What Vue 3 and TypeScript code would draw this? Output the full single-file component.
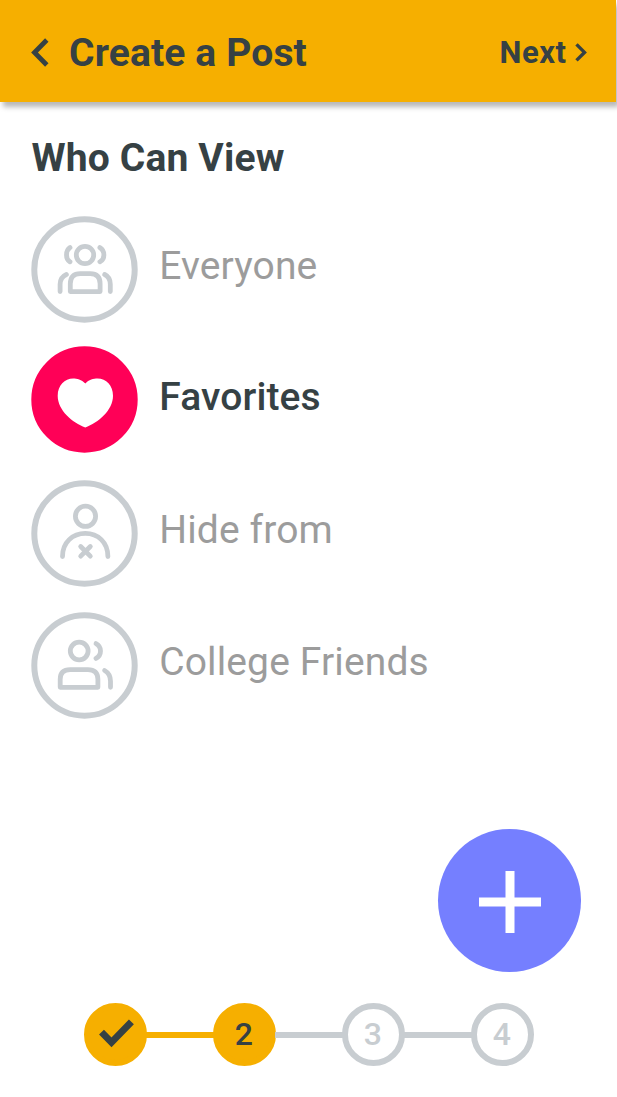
<script setup lang="ts">
import { ref } from 'vue'

type Icon = 'everyone' | 'favorites' | 'hide' | 'college'
interface Audience { icon: Icon; label: string }

const audiences: Audience[] = [
  { icon: 'everyone', label: 'Everyone' },
  { icon: 'favorites', label: 'Favorites' },
  { icon: 'hide', label: 'Hide from' },
  { icon: 'college', label: 'College Friends' },
]
const selected = ref<Icon>('favorites')
const steps = [1, 2, 3, 4]
const currentStep = 2
</script>

<template>
  <main class="screen">
    <header class="bar">
      <button class="back" aria-label="Back">
        <svg width="18" height="30" viewBox="0 0 18 30"><path d="M15.8 2 3.5 14.5l12.3 12.5" /></svg>
      </button>
      <h1>Create a Post</h1>
      <button class="next">
        <span>Next</span>
        <svg width="13" height="20" viewBox="0 0 13 20"><path d="m1.5 2.4 8 8-8 8" /></svg>
      </button>
    </header>

    <h2>Who Can View</h2>

    <ul class="list">
      <li
        v-for="a in audiences"
        :key="a.icon"
        :class="['row', a.icon, { active: selected === a.icon }]"
        @click="selected = a.icon"
      >
        <svg class="badge" viewBox="-53.5 -53.5 107 107">
          <circle class="ring" r="50.2" />
          <g v-if="a.icon === 'everyone'" class="line">
            <circle cx=".5" cy="-14.5" r="8.7" />
            <path d="M-14.5-21.9Q-18-19.5-18-14.6T-14.5-7.7M15.4-21.9Q19.4-19.5 19.4-14.6T15.4-7.7" />
            <path d="M-14.2 22.1V14.3Q-14.2 4.2-4.3 4.2H5.7Q15.6 4.2 15.6 14.3V22.1Z" />
            <path d="M-18.1 5Q-24.4 7.8-24.4 14.8V22.1M20.2 5Q25.8 7.8 25.8 14.8V22.1" />
          </g>
          <path
            v-else-if="a.icon === 'favorites'"
            class="heart"
            d="M.8-15.9C-2.8-19.7-7.8-20.9-11.3-20.9C-19.8-20.9-26.8-13.7-26.8-3.7C-26.8 10.8-12 23.3.8 28C13.7 23.3 28.5 10.8 28.5-3.7C28.5-13.7 21.7-20.9 13-20.9C9.2-20.9 4.2-19.7.8-15.9Z"
          />
          <g v-else-if="a.icon === 'hide'" class="line">
            <circle cx="1" cy="-17.2" r="10.1" />
            <path d="M-22 23C-22 8.8-11.8-.1.8-.1S23.4 8.8 23.4 23" />
            <path d="m-3.8 13 9.6 9.6m0-9.6-9.6 9.6" />
          </g>
          <g v-else class="line">
            <circle cx="-5.3" cy="-14.5" r="8.9" />
            <path d="M11.5-21.9Q16-19.5 16-14.5T11.5-7.1" />
            <path d="M-24.3 21.8V13.8Q-24.3 4.2-14.3 4.2H3.4Q13.4 4.2 13.4 13.8V21.8Z" />
            <path d="M20.1 5Q26 8.3 26 15.8V21.8" />
          </g>
        </svg>
        <span class="label">{{ a.label }}</span>
      </li>
    </ul>

    <button class="fab" aria-label="Add">
      <svg width="62" height="62" viewBox="0 0 62 62"><path d="M31 0v62M0 31h62" /></svg>
    </button>

    <ol class="steps">
      <li v-for="s in steps" :key="s" :class="{ reached: s <= currentStep }">
        <svg v-if="s < currentStep" width="36" height="30" viewBox="0 0 36 30">
          <path d="m3.5 13.2 10 10.2L33.4 2.8" />
        </svg>
        <span v-else>{{ s }}</span>
      </li>
    </ol>
  </main>
</template>

<style>
body { margin: 0; background: #fff; }
</style>

<style scoped>
.screen {
  width: 617px;
  height: 1097px;
  box-sizing: border-box;
  overflow: hidden;
  display: flex;
  flex-direction: column;
  background: #fff;
  color: #364144;
  font-family: Roboto, "Liberation Sans", sans-serif;
}
button {
  border: 0;
  padding: 0;
  background: none;
  color: inherit;
  font: inherit;
  display: flex;
  align-items: center;
}
svg { display: block; flex: none; fill: none; overflow: visible; }
h1, h2, ul, ol { margin: 0; padding: 0; list-style: none; }
.bar {
  width: 616px;
  height: 102px;
  flex: none;
  box-sizing: border-box;
  padding: 3px 28.5px 0 31px;
  display: flex;
  align-items: center;
  background: #f6af00;
  box-shadow: 3px 5px 5px rgba(0, 0, 0, .28);
}
.bar path { stroke: #364144; stroke-width: 4.8; }
.bar .next path { stroke-width: 3.4; }
h1, h2 {
  font-size: 39px;
  line-height: 46px;
  font-weight: 700;
  letter-spacing: .15px;
  white-space: nowrap;
}
h1 { margin-left: 20px; }
.next {
  margin: -1px 0 0 auto;
  gap: 8px;
  font-size: 31px;
  font-weight: 700;
  letter-spacing: .5px;
}
h2 { margin: 33px 0 0 31.5px; }
.list { margin: 34.5px 0 0 31.3px; }
.row { height: 107px; display: flex; align-items: center; margin-bottom: 24px; }
.row.favorites { margin-bottom: 26px; }
.row.hide { margin-bottom: 25px; }
.badge { width: 107px; height: 107px; }
.favorites .badge { margin-top: -1.2px; }
.ring, .line { stroke: #c8cdd1; }
.ring { stroke-width: 6; }
.line { stroke-width: 4.8; stroke-linecap: round; stroke-linejoin: round; }
.heart { fill: #c8cdd1; }
.active .ring { fill: #ff0057; stroke: #ff0057; }
.active .heart { fill: #fff; }
.label {
  margin: -6px 0 0 20.9px;
  font-size: 39px;
  line-height: 46px;
  letter-spacing: .13px;
  color: #9c9c9c;
}
.active .label { color: #364144; font-weight: 500; }
.fab {
  width: 143px;
  height: 143px;
  flex: none;
  box-sizing: border-box;
  margin: 86px 0 0 438px;
  padding: 3px 0 0 1px;
  border-radius: 50%;
  background: #757fff;
  justify-content: center;
}
.fab path { stroke: #fff; stroke-width: 9; }
.steps { display: flex; margin: 31px 0 0 84px; }
.steps li {
  width: 63px;
  height: 63px;
  box-sizing: border-box;
  border: 6px solid #c8cdd1;
  border-radius: 50%;
  display: flex;
  align-items: center;
  justify-content: center;
  position: relative;
  color: #c8cdd1;
  font-size: 32px;
  font-weight: 500;
}
.steps span { margin-right: 1.5px; }
.steps li + li { margin-left: 66px; }
.steps li + li::before {
  content: "";
  position: absolute;
  right: calc(100% + 5px);
  top: 23px;
  width: 68px;
  height: 6px;
  background: #c8cdd1;
}
.steps .reached { border-color: #f6af00; background: #f6af00; color: #364144; }
.steps li.reached + li.reached::before { background: #f6af00; }
.steps path { stroke: #364144; stroke-width: 6.9; }
</style>
